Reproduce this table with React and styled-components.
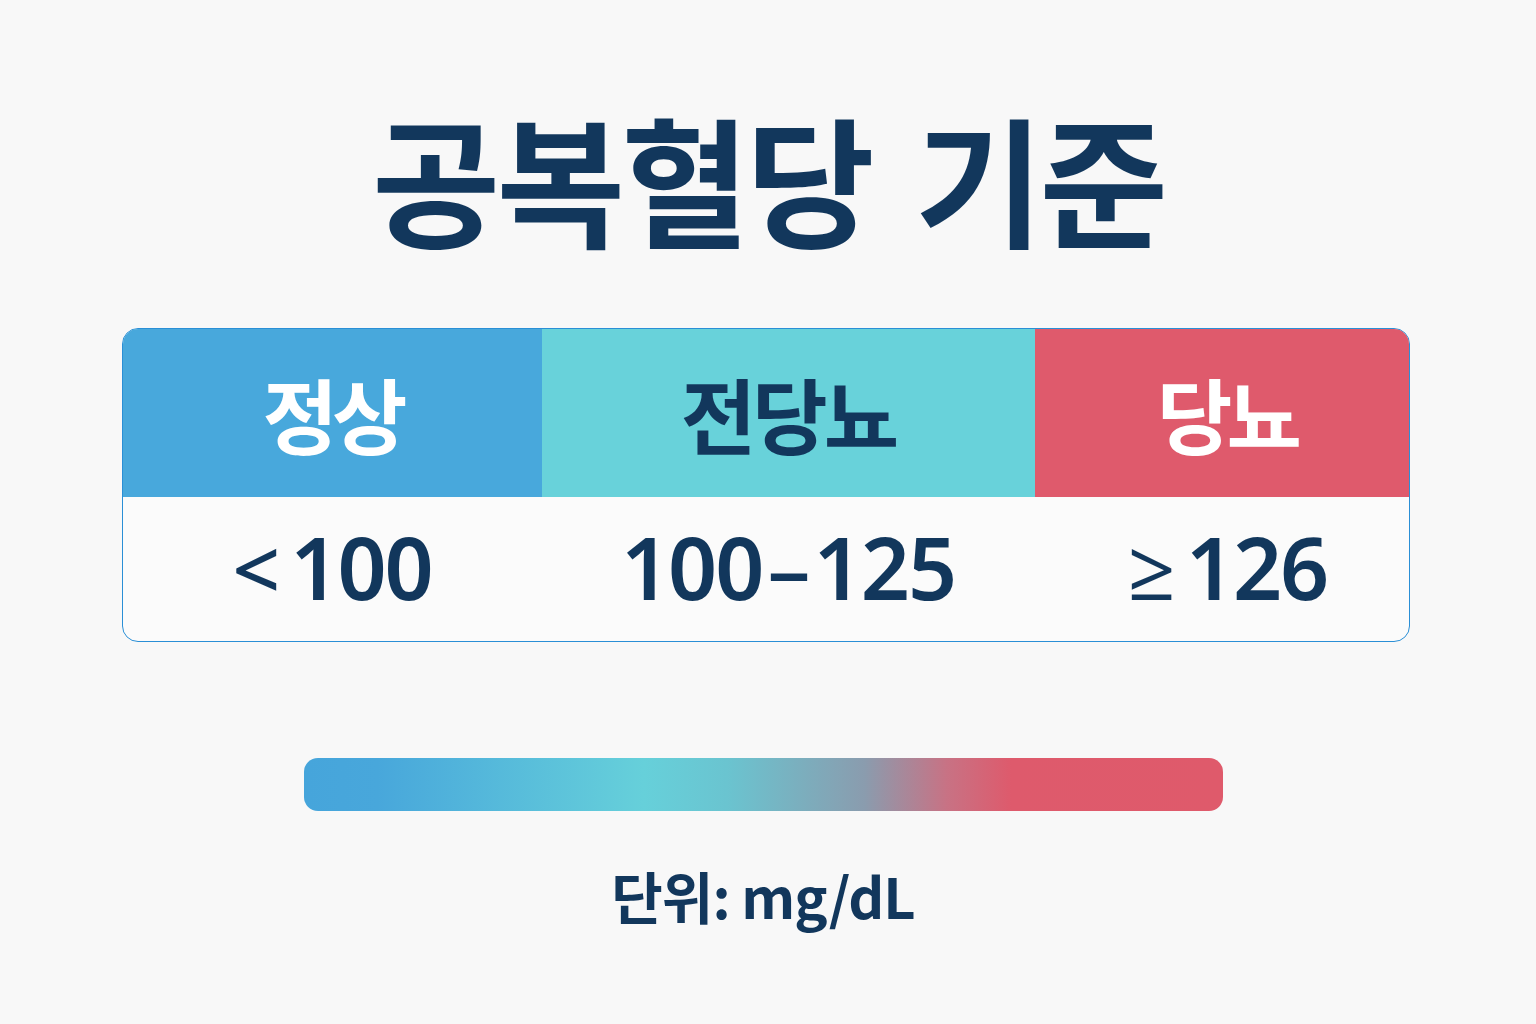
import React from 'react';
import styled, { createGlobalStyle } from 'styled-components';

const GlobalStyle = createGlobalStyle`
  html, body {
    margin: 0;
    padding: 0;
    background: #f8f8f8;
  }
  body {
    font-family: 'Noto Sans CJK KR', 'Noto Sans', sans-serif;
    color: #12375c;
  }
`;

const Page = styled.div`
  width: 1536px;
  height: 1024px;
  display: flex;
  flex-direction: column;
  align-items: center;
  padding-top: 101px;
  box-sizing: border-box;
`;

const Title = styled.h1`
  margin: 0;
  font-size: 140px;
  line-height: 150px;
  font-weight: 700;
  letter-spacing: -4px;
  word-spacing: 16px;
  color: #12375c;
  margin-right: 0;
`;

const Card = styled.div`
  margin-top: 77px;
  width: 1286px;
  display: grid;
  grid-template-columns: 419px 493px 374px;
  grid-template-rows: 168px 144px;
  border: 1px solid #2a8fd6;
  border-radius: 16px;
  overflow: hidden;
  background: #fbfbfb;
  margin-left: -5px;
`;

const Head = styled.div`
  background: ${p => p.$bg};
  color: ${p => p.$fg};
  display: flex;
  align-items: center;
  justify-content: center;
  font-size: 82px;
  font-weight: 700;
  letter-spacing: ${p => p.$ls}px;
  padding-left: ${p => p.$shift || 0}px;
  padding-bottom: 2px;
`;

const Value = styled.div`
  display: flex;
  align-items: center;
  justify-content: center;
  font-family: 'Noto Sans', 'Open Sans', sans-serif;
  font-size: 86px;
  font-weight: 600;
  letter-spacing: -2px;
  color: #12375c;
  padding-bottom: 6px;
  padding-left: ${p => p.$shift || 0}px;
`;

const Sym = styled.span`
  font-size: 84px;
  font-weight: 500;
  margin-right: 12px;
  position: relative;
  top: 1px;
`;

const Dash = styled.span`
  font-weight: 500;
  margin: 0 5px;
`;

const Bar = styled.div`
  margin-top: 116px;
  width: 919px;
  height: 53px;
  border-radius: 14px;
  margin-left: -10px;
  background: linear-gradient(
    90deg,
    #46a5db 0%,
    #48a7db 8%,
    #66d0da 37%,
    #6ac4d0 46%,
    #8a9cae 61%,
    #c87284 70%,
    #de5a6c 77%,
    #df5a6b 100%
  );
`;

const Unit = styled.div`
  margin-top: 43px;
  font-size: 56px;
  font-weight: 700;
  letter-spacing: -1px;
  color: #12375c;
  margin-left: -10px;
`;

const columns = [
  { label: '정상', bg: '#48a8dc', fg: '#ffffff', sym: '<', num: '100', shift: 0, ls: -6, vshift: 0 },
  { label: '전당뇨', bg: '#68d2da', fg: '#12375c', sym: '', num: '', shift: -18, ls: -4, vshift: -4 },
  { label: '당뇨', bg: '#df5a6c', fg: '#ffffff', sym: '≥', num: '126', shift: 10, ls: -6, vshift: 12 },
];

export default function App() {
  return (
    <>
      <GlobalStyle />
      <Page>
        <Title>공복혈당 기준</Title>
        <Card>
          {columns.map(c => (
            <Head key={c.label} $bg={c.bg} $fg={c.fg} $shift={c.shift} $ls={c.ls}>
              {c.label}
            </Head>
          ))}
          {columns.map(c => (
            <Value key={c.label} $shift={c.vshift}>
              {c.sym && <Sym>{c.sym}</Sym>}
              {c.num || (
                <>
                  100<Dash>–</Dash>125
                </>
              )}
            </Value>
          ))}
        </Card>
        <Bar />
        <Unit>단위: mg/dL</Unit>
      </Page>
    </>
  );
}
